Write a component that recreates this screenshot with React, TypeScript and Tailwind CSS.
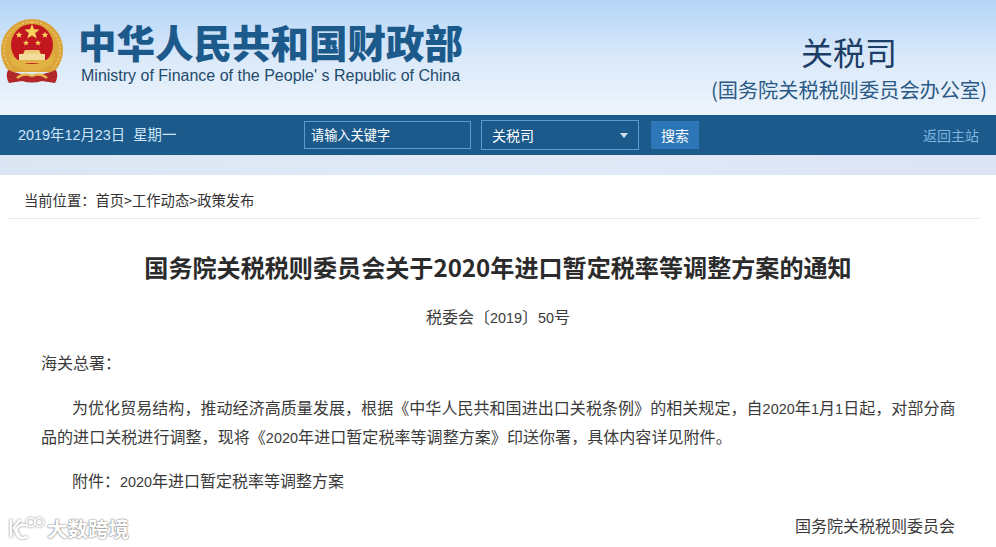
import { ReactNode } from "react"

const cjk = "font-['Noto_Sans_CJK_SC','Liberation_Sans',sans-serif]"

const Num = ({ children }: { children: ReactNode }) => (
  <span className="font-['Liberation_Sans',sans-serif] text-[14.4px] leading-none">{children}</span>
)

const Star = ({ x, y, r }: { x: number; y: number; r: number }) => {
  const pts = Array.from({ length: 10 }, (_, i) => {
    const a = -Math.PI / 2 + (i * Math.PI) / 5
    const d = i % 2 === 0 ? r : r * 0.42
    return `${(x + d * Math.cos(a)).toFixed(1)},${(y + d * Math.sin(a)).toFixed(1)}`
  }).join(" ")
  return <polygon points={pts} fill="#f8d25a" />
}

const Emblem = () => (
  <svg width="64" height="66" viewBox="0 0 64 66" className="shrink-0">
    <path d="M32 1 C48 1 63 14 63 32 C63 42 58 50 54 54 L10 54 C5 50 1 42 1 32 C1 14 16 1 32 1Z" fill="#dca53a" />
    <path d="M32 4 C46 4 60 16 60 32 C60 40 56 47 52 51 M32 4 C18 4 4 16 4 32 C4 40 8 47 12 51" fill="none" stroke="#f3d486" strokeWidth="1" strokeDasharray="2 2" />
    <path d="M8 52 Q5 58 9 65 L22 63 Q32 66 42 63 L55 65 Q59 58 56 52 Q32 62 8 52Z" fill="#b3262a" />
    <path d="M17 60 Q24 54 32 58 Q40 54 47 60" stroke="#e7b94f" strokeWidth="2.5" fill="none" />
    <circle cx="32" cy="27" r="21" fill="#c3171f" />
    <path d="M9 36 Q32 56 55 36 L52 46 Q32 60 12 46Z" fill="#e3b245" />
    <Star x={32} y={14} r={8} />
    <Star x={19} y={17} r={3.5} />
    <Star x={45} y={17} r={3.5} />
    <Star x={26} y={25} r={3.2} />
    <Star x={38} y={25} r={3.2} />
    <path d="M23 36 L25 32 L39 32 L41 36Z" fill="#f2cf7a" />
    <rect x="19" y="36" width="26" height="6" fill="#f4dc9c" />
    <rect x="15" y="42" width="34" height="3" fill="#e3b245" />
  </svg>
)

const Watermark = () => (
  <div className="absolute left-[9px] top-[516px] flex items-center gap-[2px]">
    <svg width="36" height="25" viewBox="0 0 38 25" fill="none" stroke="#fff" strokeWidth="2.6" className="[filter:drop-shadow(0_0_1px_#808080)]">
      <path d="M2 3 V22 M12 3 L5 12 L12 22" />
      <path d="M19 10 A7 7 0 1 0 19 21" />
      <circle cx="23" cy="6" r="4.5" strokeWidth="1.6" />
      <circle cx="32" cy="6" r="4.5" strokeWidth="1.6" />
    </svg>
    <span className={`${cjk} text-[20.5px] leading-none font-bold text-white [text-shadow:0_0_2px_#777,0_0_1px_#777]`}>
      大数跨境
    </span>
  </div>
)

const App = () => {
  return (
    <div className={`${cjk} relative h-[547px] w-[996px] overflow-hidden bg-white`}>
      <header className="flex h-[115px] items-start justify-between bg-gradient-to-b from-[#b4d5f8] via-[#dae9fa] to-[#eef4fb] pr-[9px]">
        <div className="flex">
          <div className="pt-[18px]"><Emblem /></div>
          <div className="ml-[14px] pt-[17px]">
            <h1 className="text-[38.5px] leading-[48px] font-black whitespace-nowrap text-[#1d5a8c]">中华人民共和国财政部</h1>
            <p className="mt-[2px] ml-[3px] font-['Liberation_Sans',sans-serif] text-[16px] leading-[18px] whitespace-nowrap text-[#1f4a6b]">
              Ministry of Finance of the People' s Republic of China
            </p>
          </div>
        </div>
        <div className="flex flex-col items-center pt-[29px] text-[#1c3d66]">
          <span className="text-[32px] leading-[44px]">关税司</span>
          <span className="mt-[1px] text-[20.2px] leading-[32px] whitespace-nowrap text-[#2a5a85]">(国务院关税税则委员会办公室)</span>
        </div>
      </header>

      <nav className="flex h-[40px] items-center bg-[#1b5a8b] text-[14px] text-[#cfe6fa]">
        <span className="w-[304px] pt-[1px] pl-[18px] text-[14.4px] whitespace-nowrap font-['Liberation_Sans','Noto_Sans_CJK_SC',sans-serif]">2019年12月23日&nbsp;&nbsp;星期一</span>
        <div className="flex h-[28px] w-[167px] items-center border border-[#5b9ad3] pl-[6px] text-[13.2px] text-white">请输入关键字</div>
        <div className="ml-[10px] flex h-[30px] w-[158px] items-center justify-between border border-[#5b9ad3] px-[10px] text-white">
          <span>关税司</span>
          <span className="border-x-[4px] border-t-[5px] border-x-transparent border-t-[#cfe0f0]" />
        </div>
        <button className="ml-[12px] h-[28px] w-[48px] bg-[#2d76b7] text-[14px] text-white">搜索</button>
        <span className="ml-auto pr-[17px] text-[#7fb5e0]">返回主站</span>
      </nav>

      <div className="h-[20px] bg-gradient-to-r from-[#dbe6f4] via-[#e0eaf7] to-[#dce4f5]" />

      <main className="px-[8px] text-[#333]">
        <div className="mr-[8px] flex h-[44px] items-center border-b border-[#e8e8e8] pt-[6px] pl-[16px] text-[14.3px] whitespace-nowrap">
          当前位置：首页&gt;工作动态&gt;政策发布
        </div>
        <h2 className="mt-[30px] text-center text-[24.1px] leading-[36px] font-bold whitespace-nowrap text-[#2b2b2b]">
          国务院关税税则委员会关于2020年进口暂定税率等调整方案的通知
        </h2>
        <div className="text-[16px] text-[#3a3a3a]">
          <p className="mt-[18px] text-center leading-[26px]">税委会〔<Num>2019</Num>〕<Num>50</Num>号</p>
          <p className="mt-[20px] pl-[33px] leading-[26px]">海关总署：</p>
          <p className="mt-[18px] mr-[29px] pl-[33px] leading-[29px] tracking-[0.06px] [text-indent:31px]">
            为优化贸易结构，推动经济高质量发展，根据《中华人民共和国进出口关税条例》的相关规定，自<Num>2020</Num>年<Num>1</Num>月<Num>1</Num>日起，对部分商品的进口关税进行调整，现将《<Num>2020</Num>年进口暂定税率等调整方案》印送你署，具体内容详见附件。
          </p>
          <p className="mt-[16px] pl-[64px] leading-[26px]">附件：<Num>2020</Num>年进口暂定税率等调整方案</p>
          <p className="mt-[19px] pr-[33px] text-right leading-[26px]">国务院关税税则委员会</p>
        </div>
      </main>

      <Watermark />
    </div>
  )
}

export default App
